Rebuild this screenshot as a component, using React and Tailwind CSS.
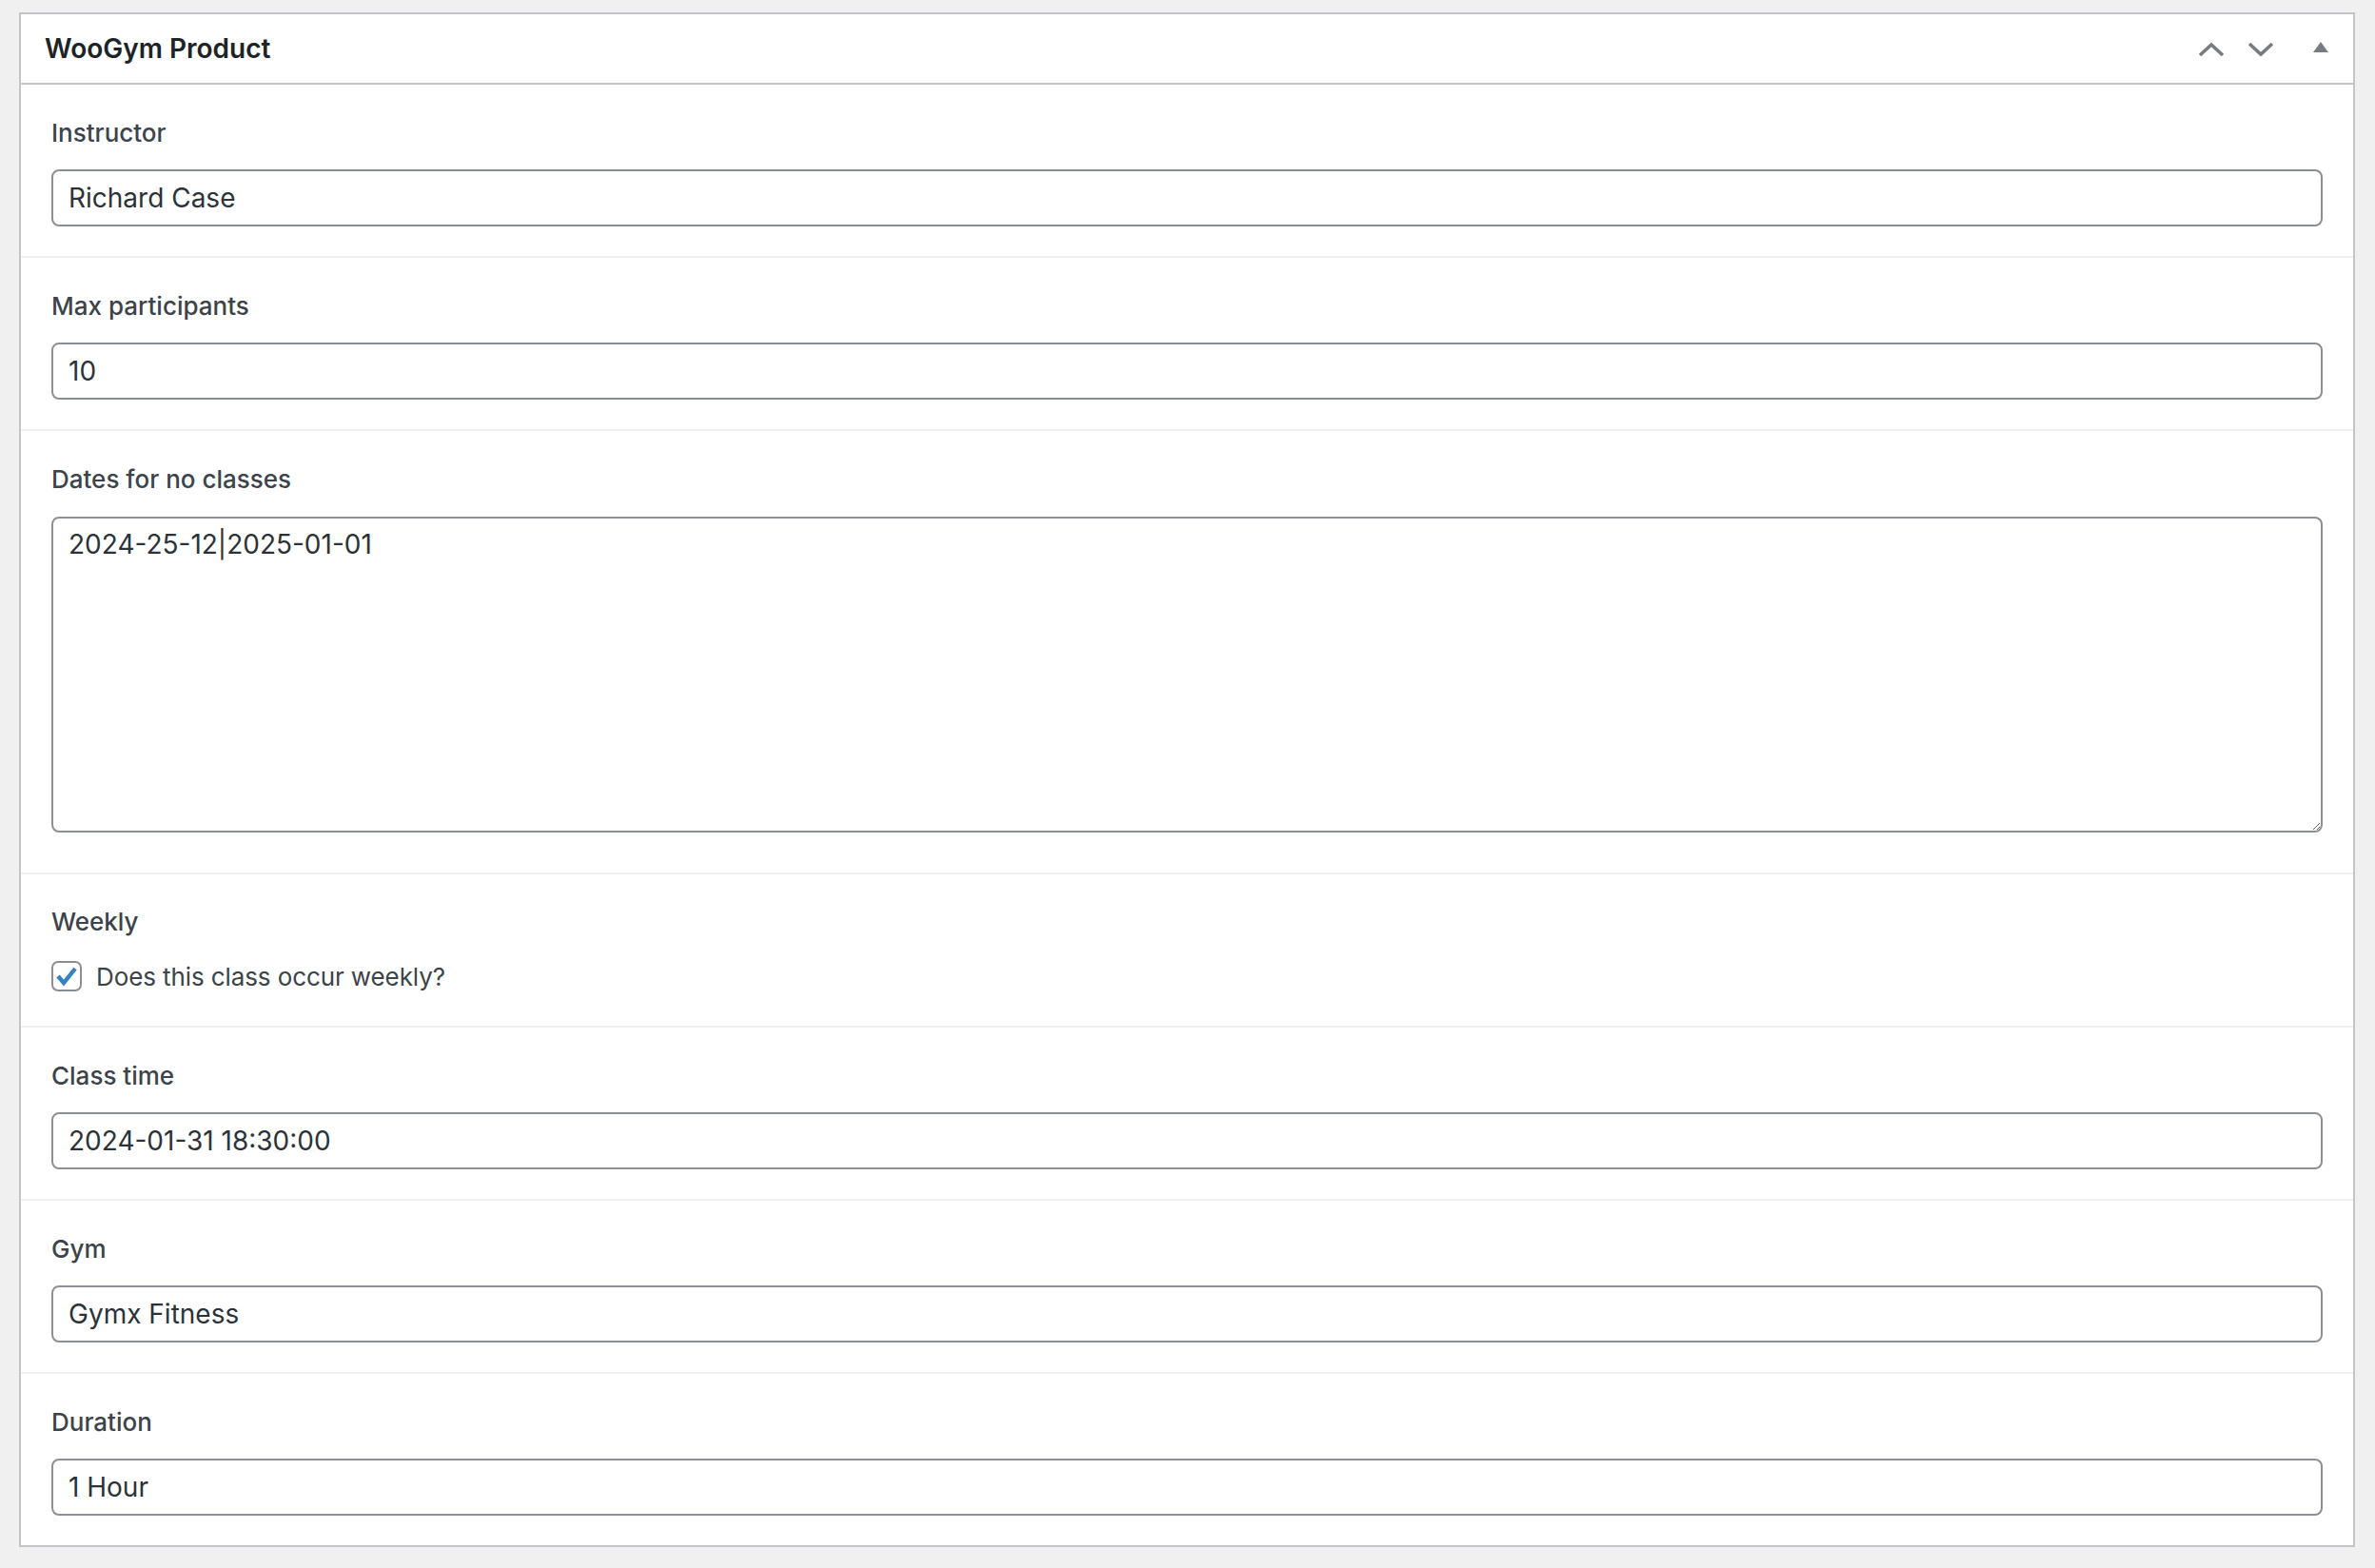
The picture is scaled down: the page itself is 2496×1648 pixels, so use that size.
import React from "react";

const fields = [
  { label: "Instructor", value: "Richard Case" },
  { label: "Max participants", value: "10" },
];

const lowerFields = [
  { label: "Class time", value: "2024-01-31 18:30:00" },
  { label: "Gym", value: "Gymx Fitness" },
  { label: "Duration", value: "1 Hour" },
];

const TextRow = ({ label, value, last }) => (
  <div className={`px-[32px] pt-[33px] pb-[31px] ${last ? "" : "border-b-2 border-[#f0f0f1]"}`}>
    <label className="block text-[26px] font-medium leading-[36px] text-[#3c434a]">{label}</label>
    <input
      type="text"
      defaultValue={value}
      className="mt-[20px] block h-[60px] w-full rounded-[8px] border-2 border-[#8c8f94] bg-white px-[16px] text-[28px] text-[#2c3338] outline-none"
    />
  </div>
);

const App = () => {
  return (
    <div className="min-h-screen bg-[#f0f0f1] pt-[13px] pl-[20px] pr-[21px] pb-[22px] font-[Inter,sans-serif]">
      <div className="border-2 border-[#c3c4c7] bg-white">
        {/* Header */}
        <div className="flex h-[74px] items-center justify-between border-b-2 border-[#c3c4c7] pl-[25px] pr-[26px]">
          <h2 className="text-[28px] font-semibold text-[#1d2327]">WooGym Product</h2>
          <div className="flex items-center">
            <svg width="28" height="18" viewBox="0 0 28 18" className="mt-[2px]">
              <polyline points="2,15 14,4 26,15" fill="none" stroke="#787c82" strokeWidth="3.6" />
            </svg>
            <svg width="28" height="18" viewBox="0 0 28 18" className="ml-[24px] mt-[2px]">
              <polyline points="2,3 14,14 26,3" fill="none" stroke="#787c82" strokeWidth="3.6" />
            </svg>
            <svg width="16" height="11" viewBox="0 0 16 11" className="ml-[41px] mb-[4px]">
              <polygon points="8,0 16,11 0,11" fill="#787c82" />
            </svg>
          </div>
        </div>

        {fields.map((f) => (
          <TextRow key={f.label} {...f} />
        ))}

        {/* Dates for no classes */}
        <div className="border-b-2 border-[#f0f0f1] px-[32px] pt-[33px] pb-[42px]">
          <label className="block text-[26px] font-medium leading-[36px] text-[#3c434a]">Dates for no classes</label>
          <textarea
            defaultValue="2024-25-12|2025-01-01"
            className="mt-[21px] block h-[332px] w-full resize-y rounded-[8px] border-2 border-[#8c8f94] bg-white px-[16px] pt-[7px] text-[28px] leading-[40px] text-[#2c3338] outline-none"
          />
        </div>

        {/* Weekly */}
        <div className="border-b-2 border-[#f0f0f1] px-[32px] pt-[32px] pb-[32px]">
          <label className="block text-[26px] font-medium leading-[36px] text-[#3c434a]">Weekly</label>
          <div className="mt-[19px] flex h-[40px] items-center">
            <div className="flex h-[32px] w-[32px] items-center justify-center rounded-[7px] border-2 border-[#8c8f94] bg-white">
              <svg width="24" height="24" viewBox="0 0 24 24">
                <polyline points="3,12 9,19 21,4" fill="none" stroke="#3582c4" strokeWidth="4.4" />
              </svg>
            </div>
            <span className="ml-[15px] text-[26px] tracking-[-0.1px] text-[#3c434a]">Does this class occur weekly?</span>
          </div>
        </div>

        {lowerFields.map((f, i) => (
          <TextRow key={f.label} {...f} last={i === lowerFields.length - 1} />
        ))}
      </div>
    </div>
  );
};

export default App;
